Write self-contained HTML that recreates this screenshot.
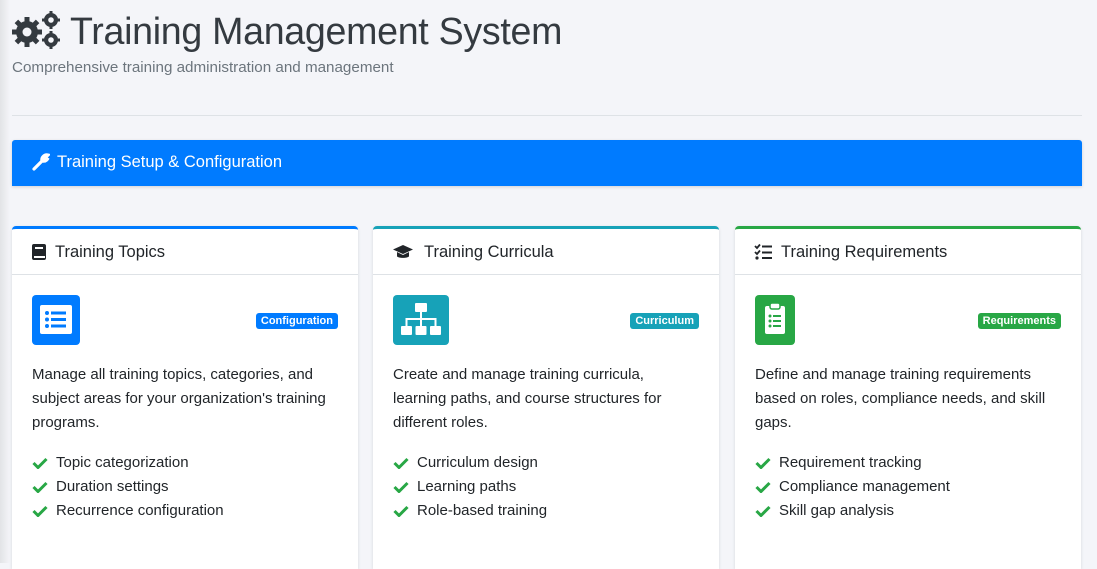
<!DOCTYPE html>
<html><head><style>
body{margin:0;width:1097px;height:563px;overflow:hidden;background:#f4f5f9;font-family:"Liberation Sans",sans-serif;color:#212529;position:relative}
.edge{position:absolute;left:0;top:0;width:10px;height:563px;background:linear-gradient(90deg,#e2e3e6,#f4f5f9)}
h1{position:absolute;left:70px;top:10px;margin:0;font-weight:400;font-size:37.6px;color:#343a40;letter-spacing:-0.3px}
.sub{position:absolute;left:12px;top:59px;font-size:15.2px;color:#6c757d}
.hr{position:absolute;left:12px;top:115px;width:1070px;height:1px;background:#dee2e6}
.bar{position:absolute;left:12px;top:140px;width:1070px;height:46px;background:#007bff;border-radius:3px 3px 0 0;color:#fff;font-size:16.5px;box-shadow:0 1px 3px rgba(0,0,0,.15)}
.bar span{position:absolute;left:45px;top:13px}
.card{position:absolute;top:226px;width:346px;height:340px;background:#fff;border-top:3px solid;border-radius:4px 4px 0 0;box-shadow:0 1px 3px rgba(0,0,0,.12)}
.ch{height:45px;border-bottom:1px solid #dee2e6;position:relative}
.ch span{position:absolute;left:43px;top:14px;font-size:16.5px}
.ch svg{position:absolute;left:19px;top:14px}
.ic{position:absolute;left:20px;top:66px;width:48px;height:50px;border-radius:4px}
.badge{position:absolute;right:20px;top:84px;font-size:11px;font-weight:bold;color:#fff;padding:2px 5px;border-radius:3px}
.desc{position:absolute;left:20px;top:134px;width:300px;font-size:15px;line-height:24px}
.list{position:absolute;left:20px;top:222px;font-size:15px;line-height:24px}
.list div{position:relative;padding-left:24px}
.list svg{position:absolute;left:0;top:6px}
</style></head><body>
<div class="edge"></div>
<svg style="position:absolute;left:11px;top:10px" width="52" height="40" viewBox="0 0 52 40">
<g fill="#343a40"><circle cx="16" cy="22" r="11"/><g stroke="#343a40" stroke-width="5">
<line x1="16" y1="7" x2="16" y2="37"/><line x1="1" y1="22" x2="31" y2="22"/><line x1="5.4" y1="11.4" x2="26.6" y2="32.6"/><line x1="26.6" y1="11.4" x2="5.4" y2="32.6"/></g>
<circle cx="16" cy="22" r="4.5" fill="#f4f5f9"/>
<circle cx="40" cy="10" r="7"/><circle cx="40" cy="30" r="7"/>
<g stroke="#343a40" stroke-width="3"><line x1="40" y1="1" x2="40" y2="19"/><line x1="31" y1="10" x2="49" y2="10"/><line x1="40" y1="21" x2="40" y2="39"/><line x1="31" y1="30" x2="49" y2="30"/></g>
<circle cx="40" cy="10" r="2.8" fill="#f4f5f9"/><circle cx="40" cy="30" r="2.8" fill="#f4f5f9"/></g></svg>
<h1>Training Management System</h1>
<div class="sub">Comprehensive training administration and management</div>
<div class="hr"></div>
<div class="bar"><svg style="position:absolute;left:20px;top:13px" width="18" height="18" viewBox="0 0 18 18"><path d="M2 16 L9 9 M10 8 A5 5 0 0 1 16 2 L13 5 L14 7 L16 5 A5 5 0 0 1 10 8" stroke="#fff" stroke-width="3.2" fill="#fff" stroke-linecap="round"/></svg><span>Training Setup &amp; Configuration</span></div>

<div class="card" style="left:12px;border-color:#007bff">
<div class="ch"><svg width="16" height="18" viewBox="0 0 16 18"><rect x="1" y="1" width="14" height="16" rx="2" fill="#212529"/><rect x="4" y="4" width="8" height="2" fill="#fff"/><rect x="3" y="13" width="11" height="2" fill="#fff"/></svg><span>Training Topics</span></div>
<div class="ic" style="background:#007bff"><svg width="48" height="50" viewBox="0 0 48 50"><rect x="8" y="10" width="32" height="29" rx="2" fill="#fff"/><g fill="#007bff"><circle cx="15" cy="18" r="2"/><circle cx="15" cy="24.5" r="2"/><circle cx="15" cy="31" r="2"/><rect x="19" y="16.5" width="15" height="3"/><rect x="19" y="23" width="15" height="3"/><rect x="19" y="29.5" width="15" height="3"/></g></svg></div>
<div class="badge" style="background:#007bff">Configuration</div>
<div class="desc">Manage all training topics, categories, and subject areas for your organization's training programs.</div>
<div class="list"><div><svg width="16" height="12"><path d="M1.5 6 L6 10.5 L14.5 2" stroke="#28a745" stroke-width="3" fill="none"/></svg>Topic categorization</div><div><svg width="16" height="12"><path d="M1.5 6 L6 10.5 L14.5 2" stroke="#28a745" stroke-width="3" fill="none"/></svg>Duration settings</div><div><svg width="16" height="12"><path d="M1.5 6 L6 10.5 L14.5 2" stroke="#28a745" stroke-width="3" fill="none"/></svg>Recurrence configuration</div></div>
</div>

<div class="card" style="left:373px;border-color:#17a2b8">
<div class="ch"><svg width="22" height="18" viewBox="0 0 22 18"><path d="M11 2 L21 6.5 L11 11 L1 6.5Z" fill="#212529"/><path d="M5 9 V13 C5 15.5 17 15.5 17 13 V9 L11 12 Z" fill="#212529"/></svg><span style="left:51px">Training Curricula</span></div>
<div class="ic" style="background:#17a2b8;width:56px"><svg width="56" height="50" viewBox="0 0 56 50"><g fill="#fff"><rect x="22" y="8" width="12" height="9" rx="1"/><rect x="8" y="31" width="11" height="9" rx="1"/><rect x="22.5" y="31" width="11" height="9" rx="1"/><rect x="37" y="31" width="11" height="9" rx="1"/><rect x="27" y="17" width="2" height="14"/><rect x="12.5" y="23" width="31" height="2"/><rect x="12.5" y="23" width="2" height="8"/><rect x="41.5" y="23" width="2" height="8"/></g></svg></div>
<div class="badge" style="background:#17a2b8">Curriculum</div>
<div class="desc" style="width:280px">Create and manage training curricula, learning paths, and course structures for different roles.</div>
<div class="list"><div><svg width="16" height="12"><path d="M1.5 6 L6 10.5 L14.5 2" stroke="#28a745" stroke-width="3" fill="none"/></svg>Curriculum design</div><div><svg width="16" height="12"><path d="M1.5 6 L6 10.5 L14.5 2" stroke="#28a745" stroke-width="3" fill="none"/></svg>Learning paths</div><div><svg width="16" height="12"><path d="M1.5 6 L6 10.5 L14.5 2" stroke="#28a745" stroke-width="3" fill="none"/></svg>Role-based training</div></div>
</div>

<div class="card" style="left:735px;border-color:#28a745">
<div class="ch"><svg width="18" height="18" viewBox="0 0 18 18"><path d="M1 3 L3 5 L6 1.5 M1 9 L3 11 L6 7.5" stroke="#212529" stroke-width="1.8" fill="none"/><rect x="8" y="2.5" width="10" height="2" fill="#212529"/><rect x="8" y="8.5" width="10" height="2" fill="#212529"/><rect x="8" y="14" width="10" height="2" fill="#212529"/><circle cx="3" cy="15" r="1.6" fill="#212529"/></svg><span style="left:46px">Training Requirements</span></div>
<div class="ic" style="background:#28a745;width:40px"><svg width="40" height="50" viewBox="0 0 40 50"><rect x="10" y="11" width="20" height="28" rx="2" fill="#fff"/><rect x="15" y="8" width="10" height="6" rx="2" fill="#fff" stroke="#28a745" stroke-width="1.5"/><g fill="#28a745"><circle cx="15" cy="21" r="1.5"/><circle cx="15" cy="26" r="1.5"/><circle cx="15" cy="31" r="1.5"/><rect x="18" y="20" width="8" height="2"/><rect x="18" y="25" width="8" height="2"/><rect x="18" y="30" width="8" height="2"/></g></svg></div>
<div class="badge" style="background:#28a745">Requirements</div>
<div class="desc">Define and manage training requirements based on roles, compliance needs, and skill gaps.</div>
<div class="list"><div><svg width="16" height="12"><path d="M1.5 6 L6 10.5 L14.5 2" stroke="#28a745" stroke-width="3" fill="none"/></svg>Requirement tracking</div><div><svg width="16" height="12"><path d="M1.5 6 L6 10.5 L14.5 2" stroke="#28a745" stroke-width="3" fill="none"/></svg>Compliance management</div><div><svg width="16" height="12"><path d="M1.5 6 L6 10.5 L14.5 2" stroke="#28a745" stroke-width="3" fill="none"/></svg>Skill gap analysis</div></div>
</div>
</body></html>
